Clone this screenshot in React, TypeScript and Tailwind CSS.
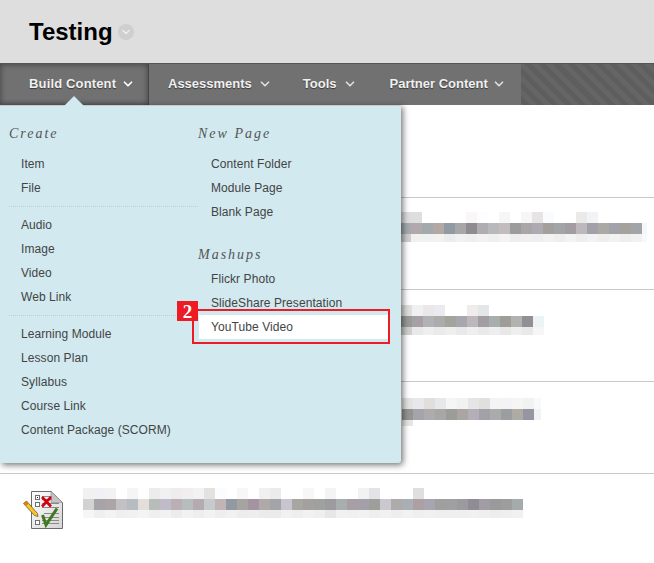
import { ChevronDown } from "lucide-react";

const SANS = "font-['Liberation_Sans',Arial,sans-serif]";

const rows = [
  {
    pad: "pl-[400px]",
    clip: "w-[247px]",
    top: ["#dedede", "#dedede", "#ffffff", "#ffffff", "#ffffff", "#ffffff", "#f9f7f8", "#fcfdfe", "#ffffff", "#f6f6f6", "#ffffff", "#f6f6f6", "#e6e4e5", "#f9fbfc", "#ffffff", "#ffffff", "#ebeae8", "#f1f3f5"],
    mid: ["#a6abb0", "#b1a9ab", "#a2aaac", "#b3a8a3", "#9199a3", "#a8a6a8", "#8f8b8e", "#afadb2", "#b7b9ba", "#c3bcbe", "#9c9c9c", "#a9a5a8", "#aeaab4", "#a39f9d", "#a2a4a6", "#a39ca3", "#bdb8bc", "#a2a1a9", "#aaa9a4", "#a1a3a9", "#a5a19d", "#a3a3aa", "#f4f7fa"],
    low: ["#cfcfd1", "#f1f1f1", "#f1f1f1", "#f3f2f0", "#ebecee", "#f1f1f1", "#efefef", "#f2f2f2", "#efefef", "#f3f3f3", "#eeeeee", "#f0f0f0", "#eeeeee", "#f2f2f2", "#eeeeee", "#f3f3f3", "#eeeeee", "#f2f2f2", "#eeeeee", "#f2f2f2", "#eeeeee", "#f1f1f1", "#f9f9f9"],
    lowH: "h-[8px]",
    mt: "mt-[13px]",
  },
  {
    pad: "pl-[401px]",
    clip: "w-[143px]",
    top: ["#dedede", "#f1f0f0", "#e9e7e8", "#e9ebee", "#ffffff", "#ffffff", "#f1ecec", "#e4e6e8"],
    mid: ["#9a9a98", "#a6a0a6", "#b2b1b6", "#aeabac", "#a3a49c", "#a9a7ae", "#bdb6bb", "#a29da3", "#a8adae", "#a09c98", "#b2b3b0", "#948f95", "#edf3f4"],
    low: ["#cfcfcf", "#e9e9e9", "#eeeeee", "#eaeaea", "#eeeeee", "#e9e9e9", "#efefef", "#e9e9e9", "#eeeeee", "#e8e8e8", "#eeeeee", "#e9e9e9", "#f6f6f6"],
    lowH: "h-[8px]",
    mt: "mt-[14px]",
  },
  {
    pad: "pl-[402px]",
    clip: "w-[139px]",
    top: ["#e3e3e3", "#e8e7ea", "#e0dfdc", "#e6e8ea", "#f5f5f5", "#f1f1f1", "#e6e5e6", "#e0e0df", "#f4f4f4", "#f3f3f5", "#f5f5f5", "#f2f2f2", "#f8f9fa"],
    mid: ["#949490", "#a5a4aa", "#aeabac", "#a9a7a6", "#9c9d9a", "#aaa5a3", "#b2afb9", "#a3a1a8", "#a9acaa", "#9b9da0", "#aeaba4", "#9596a2", "#f1f2f3"],
    low: ["#e6e6e6"],
    lowH: "h-[6px]",
    mt: "mt-[15px]",
  },
  {
    pad: "pl-[83px]",
    clip: "w-[440px]",
    top: ["#f3f1f0", "#eff1f4", "#f3f2f2", "#ffffff", "#f5f5f5", "#fefefd", "#ececec", "#f1f1f4", "#efedec", "#f0eeef", "#f1f2f4", "#e3e2e0", "#fbfcfe", "#ffffff", "#f8f6f7", "#ffffff", "#f2f0ef", "#eaebed", "#ffffff", "#ffffff", "#f7f7f7", "#ffffff", "#f4f4f4", "#ffffff", "#ffffff", "#f3f2f0", "#e2e3e8", "#ffffff", "#ffffff", "#ffffff", "#dfdfe2", "#ffffff", "#ffffff", "#ffffff", "#ffffff", "#ffffff", "#ffffff", "#ffffff", "#ffffff", "#ffffff"],
    mid: ["#d3d2d2", "#a6a3a9", "#aca4a5", "#c2c2c4", "#b6bcc0", "#e2dfda", "#b7bdbb", "#c0bbc8", "#b9afb5", "#b7bdbd", "#b3abb0", "#c5cacd", "#c0b4b5", "#919aa3", "#a6a3a1", "#a493a1", "#aeaaa9", "#a3a4a7", "#c9c5cf", "#a8a6a1", "#a3a09f", "#9fa1a0", "#9e9ba0", "#a7afae", "#a89ea6", "#a3a0aa", "#9e9f9a", "#ccc8d0", "#adacaa", "#a9b0b4", "#ae9fa2", "#a7a5af", "#9e9f9e", "#a0a0a2", "#9c9a9f", "#8f8c94", "#a29ca6", "#9b9a9b", "#9c9d9c", "#a5abab"],
    low: ["#f6f6f6", "#efefef", "#f3f3f3", "#efefef", "#f1f1f1", "#f4f4f4", "#efefef", "#f2f2f2", "#ececec", "#f2f2f2", "#eeeeee", "#f2f2f2", "#eeeeee", "#f1f1f1", "#ededed", "#eeeeee", "#ebebeb", "#ebebeb", "#f1f1f1", "#eeeeee", "#f2f2f2", "#efefef", "#e7e7e7", "#f1f1f1", "#f0f0f0", "#f2f2f2", "#eeeeee", "#f1f1f1", "#eeeeee", "#f2f2f2", "#efefef", "#f1f1f1", "#efefef", "#efefef", "#efefef", "#f1f1f1", "#efefef", "#ededed", "#efefef", "#f1f1f1"],
    lowH: "h-[8px]",
    mt: "mt-[13px]",
  },
];

function Blocks({ colors, height }: { colors: string[]; height: string }) {
  return (
    <div className={`flex ${height}`}>
      {colors.map((c, i) => (
        <div key={i} className="w-[11px] shrink-0" style={{ backgroundColor: c }} />
      ))}
    </div>
  );
}

function ExamIcon() {
  return (
    <svg width="42" height="42" viewBox="0 0 42 42" className="absolute left-[22px] top-[490px]">
      <defs>
        <linearGradient id="sheet" x1="0" y1="0" x2="1" y2="1">
          <stop offset="0" stopColor="#ffffff" />
          <stop offset="1" stopColor="#d4d4d4" />
        </linearGradient>
      </defs>
      <path d="M9.5 1.5H29L40.5 12.5V38.5H9.5Z" fill="url(#sheet)" stroke="#6b6b6b" />
      <path d="M29 1.5V12.5H40.5Z" fill="#c4c4c4" stroke="#8a8a8a" strokeWidth="0.6" />
      <g fill="#fff" stroke="#6f6f6f">
        <rect x="13.5" y="5.5" width="4" height="4" />
        <rect x="13.5" y="12.5" width="4" height="4" />
        <rect x="13.5" y="30.5" width="4" height="4" />
      </g>
      <rect x="15" y="7" width="1" height="1" fill="#222" />
      <g stroke="#8a8a8a" strokeWidth="1">
        <path d="M20 6.5h10M20 9.5h10M20 13.5h17M20 17.5h17M22 23.5h15M22 27.5h15M20 30.5h17M20 33.5h17" />
      </g>
      <path d="M20 7L29 16.5M29 7L20 16.5" stroke="#d4000f" strokeWidth="2.6" />
      <path d="M20.5 25L24 35L35 18.5" fill="none" stroke="#3f7a1e" strokeWidth="3" />
      <path d="M1.5 13.5L4.5 11L15.5 23.5L16 26.5L12.5 25.5Z" fill="#f6c62c" stroke="#6e5b1c" strokeWidth="0.8" />
      <path d="M1.5 13.5L4.5 11L6.8 13.6L3.8 16Z" fill="#e07a1e" />
    </svg>
  );
}

const createGroups = [
  ["Item", "File"],
  ["Audio", "Image", "Video", "Web Link"],
  ["Learning Module", "Lesson Plan", "Syllabus", "Course Link", "Content Package (SCORM)"],
];

function MenuItem({ label, right }: { label: string; right?: boolean }) {
  return (
    <div className={`h-6 text-[12px] leading-6 tracking-[0.08px] text-[#444444] ${right ? "pl-[13px]" : "pl-[12px]"}`}>
      {label}
    </div>
  );
}

function Heading({ label }: { label: string }) {
  return (
    <div className="font-['Liberation_Serif',Georgia,serif] text-[14px] italic leading-4 tracking-[2px] text-[#555555]">
      {label}
    </div>
  );
}

function Menu() {
  return (
    <div className={`absolute left-0 top-[105px] flex h-[358px] w-[401px] rounded-br-[3px] border-t border-[#c9c9c9] bg-[#d1e9ef] pl-[9px] pt-[20px] shadow-[2px_2px_6px_rgba(0,0,0,0.55)] ${SANS}`}>
      {/* triangle under Build Content */}
      <div className="absolute left-[64px] top-[-10px] h-0 w-0 border-x-[10px] border-b-[10px] border-x-transparent border-b-[#d1e9ef]" />
      <div className="w-[189px]">
        <Heading label="Create" />
        <div className="mt-[10px]">
          {createGroups.map((group, i) => (
            <div key={i} className={i > 0 ? "mt-[6px] border-t border-dotted border-[#bfcdd0] pt-[6px]" : ""}>
              {group.map((item) => (
                <MenuItem key={item} label={item} />
              ))}
            </div>
          ))}
        </div>
      </div>
      <div className="relative w-[200px]">
        <Heading label="New Page" />
        <div className="mt-[10px]">
          {["Content Folder", "Module Page", "Blank Page"].map((item) => (
            <MenuItem key={item} label={item} right />
          ))}
        </div>
        <div className="mt-[23px]">
          <Heading label="Mashups" />
        </div>
        <div className="mt-[4px]">
          {["Flickr Photo", "SlideShare Presentation"].map((item) => (
            <MenuItem key={item} label={item} right />
          ))}
          <div className="relative -ml-[6px] mt-[-6px] h-[35px] w-[198px] border-2 border-[#ed1c24] pl-[5px] pt-[4px]">
            <div className="h-[24px] bg-white pl-[12px] text-[12px] leading-6 tracking-[0.08px] text-[#444444]">
              YouTube Video
            </div>
            <div className="absolute left-[-17px] top-[-10px] flex h-[20px] w-[21px] items-center justify-center bg-[#ed1c24] font-['Liberation_Serif',serif] text-[19px] font-bold leading-none text-white">
              2
            </div>
          </div>
        </div>
      </div>
    </div>
  );
}

function NavItem({ label, className, iconClass, textClass }: { label: string; className: string; iconClass: string; textClass?: string }) {
  return (
    <div className={`flex h-full items-center pb-[2px] ${className}`}>
      <span className={`text-[13px] font-bold text-[#f0f0f0] [text-shadow:0_1px_1px_rgba(0,0,0,0.5)] ${textClass ?? ""}`}>{label}</span>
      <ChevronDown className={`h-[14px] w-[14px] ${iconClass}`} strokeWidth={3} />
    </div>
  );
}

export default function App() {
  return (
    <div className={`relative h-[563px] w-[654px] overflow-hidden bg-white ${SANS}`}>
      <div className="flex h-[63px] items-center bg-[#dedede] pl-[29px]">
        <h1 className="text-[24px] font-bold leading-none text-black">Testing</h1>
        <div className="ml-[5px] flex h-4 w-4 items-center justify-center rounded-full bg-[#cfcfcf]">
          <ChevronDown className="h-3 w-3 text-[#eeeeee]" strokeWidth={3} />
        </div>
      </div>

      <div className="flex h-[42px] border-t border-[#555555] bg-[repeating-linear-gradient(45deg,#5e5e5e_0px,#5e5e5e_5px,#656565_5px,#656565_10px)]">
        <div className="flex w-[521px] bg-[#717171]">
          <NavItem label="Build Content" textClass="tracking-[0.15px]" iconClass="ml-[5px] text-white" className="w-[149px] border-r border-[#444444] pl-[29px] shadow-[inset_0_0_6px_rgba(0,0,0,0.45)]" />
          <NavItem label="Assessments" iconClass="ml-[6px] text-[#dddddd]" className="pl-[19px]" />
          <NavItem label="Tools" iconClass="ml-[6px] text-[#dddddd]" className="pl-[31px]" />
          <NavItem label="Partner Content" iconClass="ml-[4px] text-[#dddddd]" className="pl-[33px]" />
        </div>
      </div>

      <div>
        <div className="h-[93px] border-b border-[#c8c8c8]" />
        {rows.map((r, i) => (
          <div key={i} className={`${r.pad} h-[92px] ${i < 3 ? "border-b border-[#c8c8c8]" : ""} pt-px`}>
            <div className={`${r.mt} ${r.clip} overflow-hidden`}>
              <Blocks colors={r.top} height="h-[11px]" />
              <Blocks colors={r.mid} height="h-[11px]" />
              <Blocks colors={r.low} height={r.lowH} />
            </div>
          </div>
        ))}
      </div>

      <ExamIcon />
      <Menu />
    </div>
  );
}
